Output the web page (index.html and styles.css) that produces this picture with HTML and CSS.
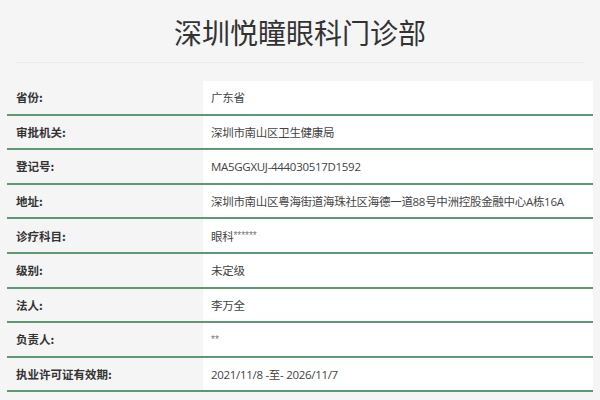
FILE: index.html
```html
<!DOCTYPE html>
<html lang="zh-CN">
<head>
<meta charset="utf-8">
<title>深圳悦瞳眼科门诊部</title>
<link rel="stylesheet" href="styles.css">
</head>
<body>
<div class="page">
  <header class="head">
    <h1 class="title">深圳悦瞳眼科门诊部</h1>
  </header>
  <div class="info">
    <div class="row"><div class="label">省份:</div><div class="value">广东省</div></div>
    <div class="row"><div class="label">审批机关:</div><div class="value">深圳市南山区卫生健康局</div></div>
    <div class="row"><div class="label">登记号:</div><div class="value">MA5GGXUJ-444030517D1592</div></div>
    <div class="row"><div class="label">地址:</div><div class="value">深圳市南山区粤海街道海珠社区海德一道88号中洲控股金融中心A栋16A</div></div>
    <div class="row"><div class="label">诊疗科目:</div><div class="value">眼科<span class="mask">******</span></div></div>
    <div class="row"><div class="label">级别:</div><div class="value">未定级</div></div>
    <div class="row"><div class="label">法人:</div><div class="value">李万全</div></div>
    <div class="row"><div class="label">负责人:</div><div class="value"><span class="mask">**</span></div></div>
    <div class="row"><div class="label">执业许可证有效期:</div><div class="value">2021/11/8 -至- 2026/11/7</div></div>
  </div>
</div>
</body>
</html>
```

FILE: styles.css
```css
html, body {
  margin: 0;
  padding: 0;
  background: #f5f5f5;
}
body {
  font-family: "Open Sans", "Noto Sans CJK SC", sans-serif;
  color: #333;
}
.page {
  width: 600px;
  height: 400px;
  overflow: hidden;
}
.head {
  margin: 0 15px;
  height: 62px;
  border-bottom: 1px solid #ececec;
  display: flex;
  align-items: center;
  justify-content: center;
}
.title {
  margin: 0;
  font-family: "Noto Sans CJK SC", sans-serif;
  font-weight: 400;
  font-size: 28px;
  line-height: 34px;
  color: #333;
  padding-top: 2px;
}
.info {
  margin: 18px 7px 0 7px;
}
.row {
  display: flex;
  height: 32.6px;
  border-bottom: 2px solid #5f9873;
}
.label {
  width: 196px;
  padding-left: 9px;
  box-sizing: border-box;
  display: flex;
  align-items: center;
  font-family: "Noto Sans CJK SC", sans-serif;
  font-weight: 700;
  font-size: 11.5px;
  color: #333;
}
.value {
  flex: 1;
  background: #fff;
  padding-left: 8px;
  display: flex;
  align-items: center;
  white-space: nowrap;
  font-size: 11.5px;
  letter-spacing: -0.3px;
  color: #444;
}
.mask {
  font-family: "Liberation Sans", sans-serif;
  font-size: 10px;
  letter-spacing: 0;
  color: #777;
}
```
